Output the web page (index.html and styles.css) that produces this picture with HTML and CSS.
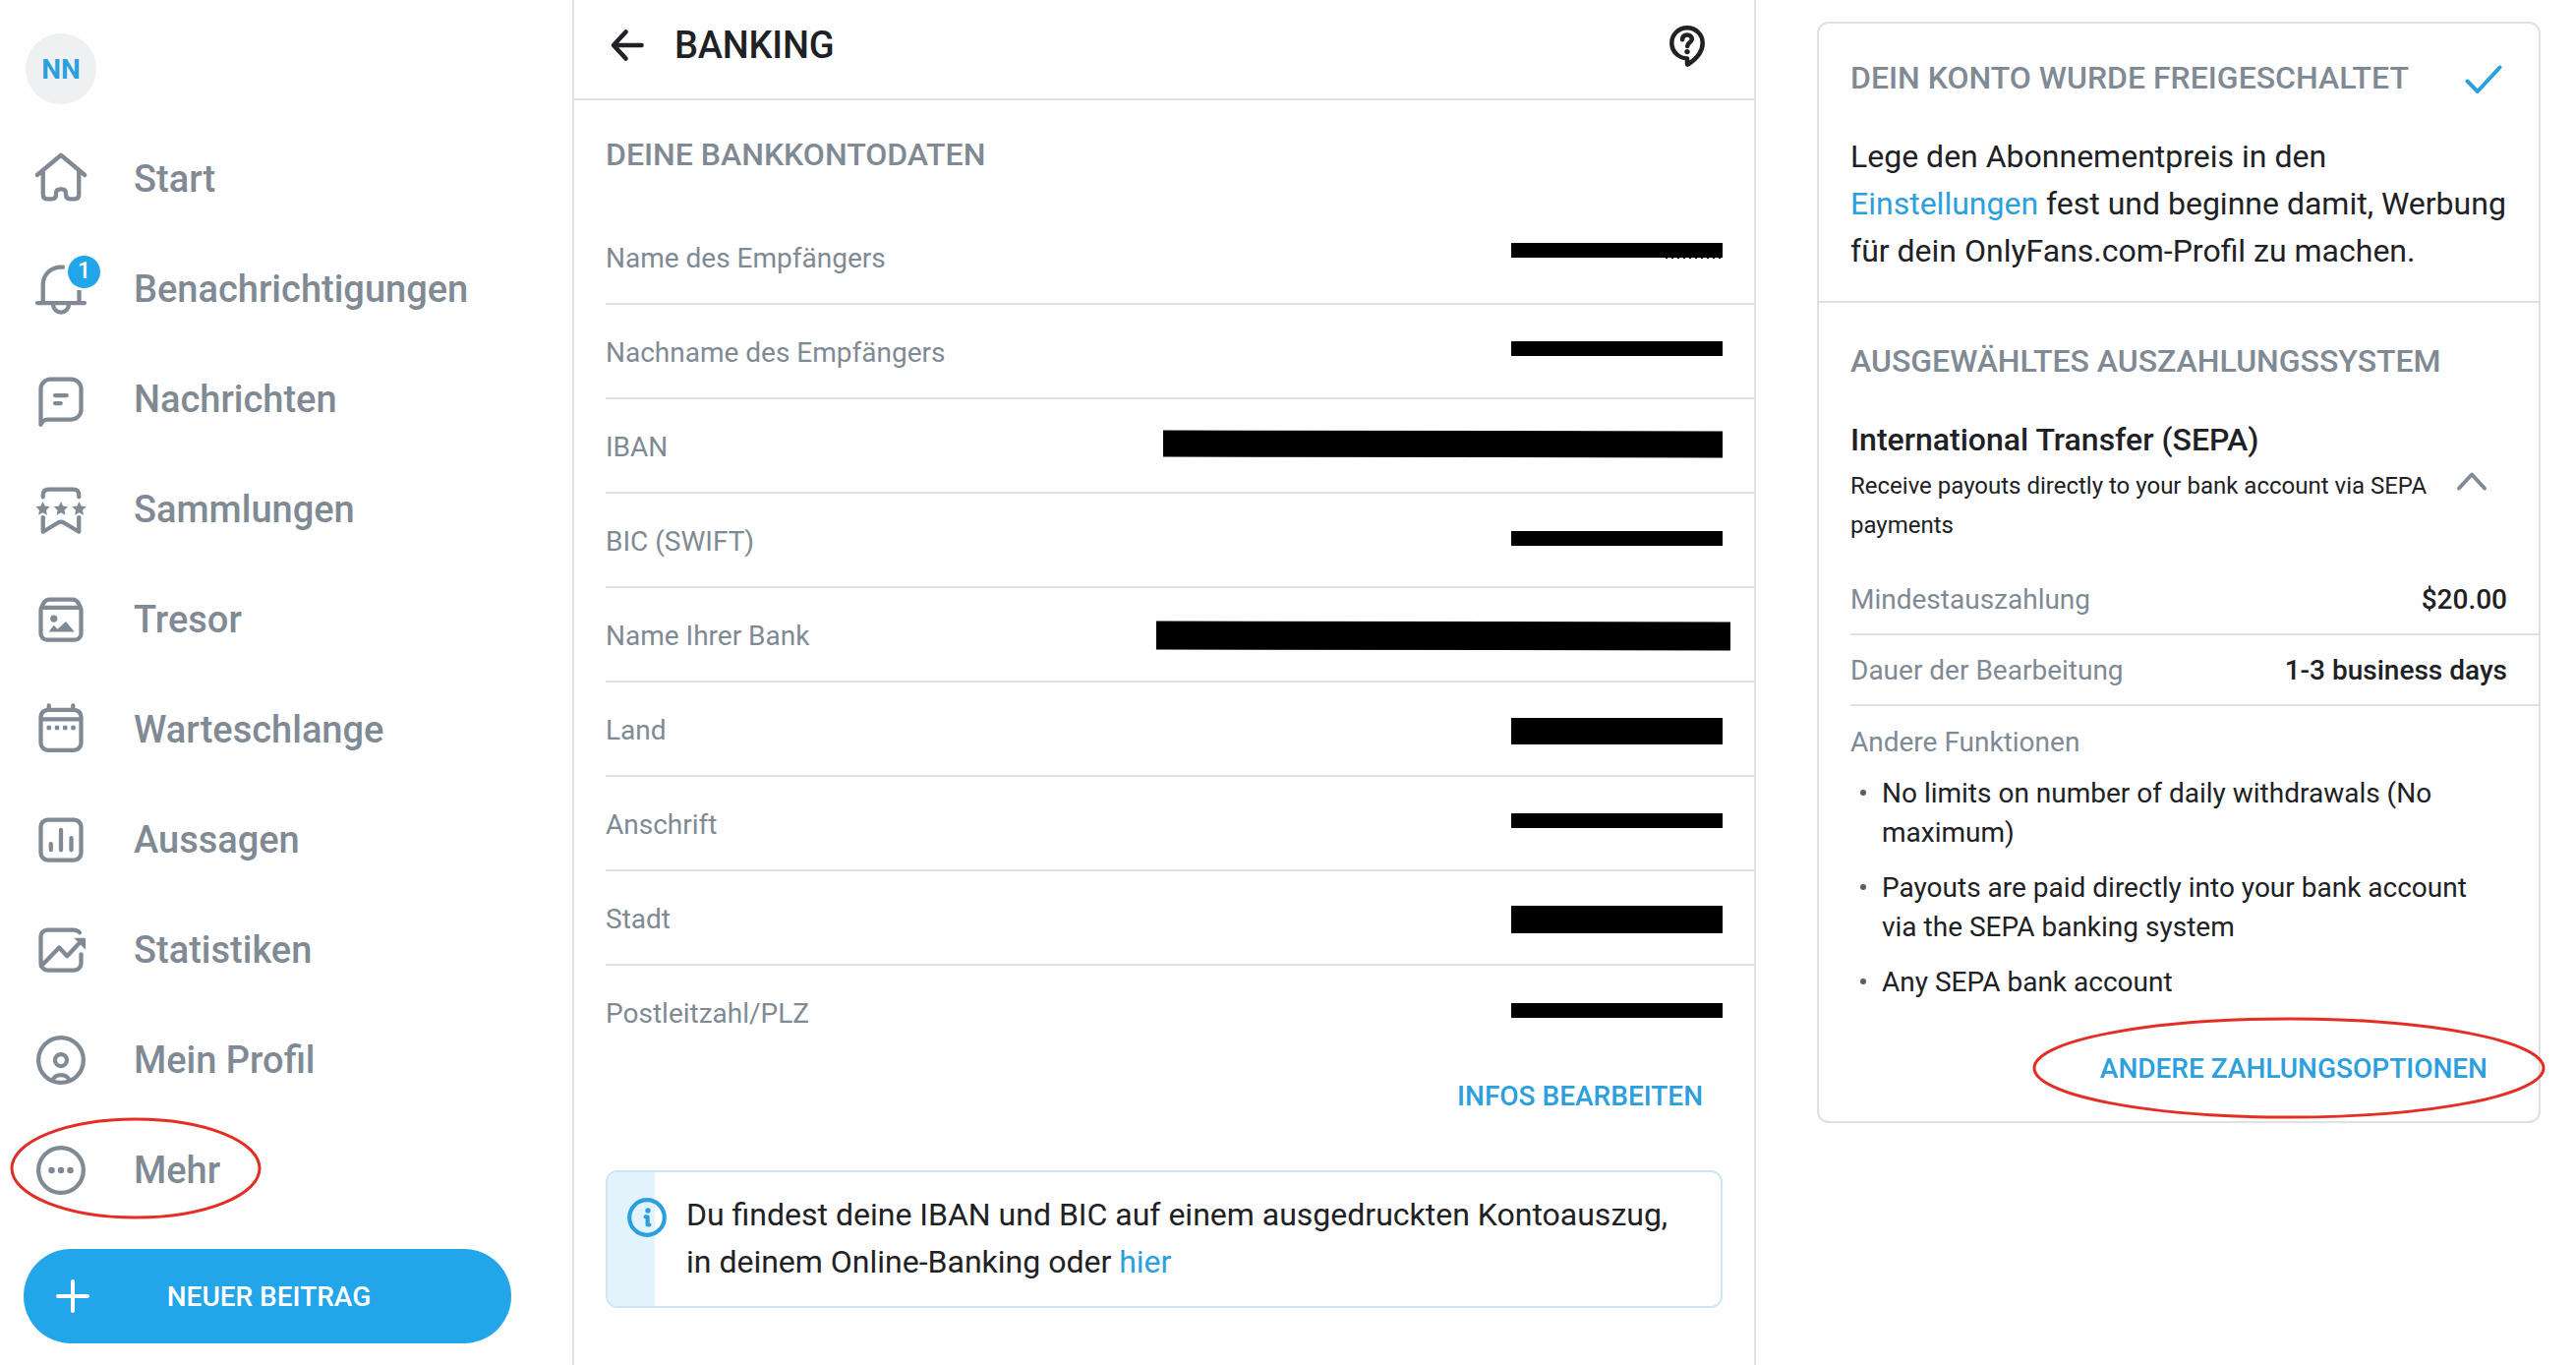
FILE: index.html
```html
<!DOCTYPE html>
<html lang="de">
<head>
<meta charset="utf-8">
<title>Banking</title>
<link rel="stylesheet" href="styles.css">
</head>
<body>
<div class="app">
  <aside class="sidebar">
    <div class="avatar"><span>NN</span></div>
    <nav class="nav">
      <a class="nav-item"><svg class="icon" viewBox="0 0 24 24"><path d="M2.3 10.4 12 2.3l9.7 8.1M4.7 9v9.4q0 1.7 1.7 1.7h1.9q1.7 0 1.7-1.7v-.6q0-1.7 1.7-1.7h.6q1.7 0 1.7 1.7v.6q0 1.7 1.7 1.7h1.9q1.7 0 1.7-1.7V9"/></svg><span>Start</span></a>
      <a class="nav-item"><svg class="icon" viewBox="0 0 24 24"><path class="butt" d="M13.5 3.1q-.7-.1-1.5-.1c-4.2 0-7.3 3.1-7.3 7.2v7.3M19.4 12.4v5.1"/><path d="M2.4 17.6h19.2M8.8 18.2a3.2 3.2 0 0 0 6.4 0"/></svg><span>Benachrichtigungen</span><b class="badge">1</b></a>
      <a class="nav-item"><svg class="icon" viewBox="0 0 24 24"><path d="M3.8 22.3V7.8a4 4 0 0 1 4-4h8.4a4 4 0 0 1 4 4v8.4a4 4 0 0 1-4 4H6.4q-1.7 0-2.6 2.1M9.6 10.4h4.7M9.6 13.6h2.3"/></svg><span>Nachrichten</span></a>
      <a class="nav-item"><svg class="icon" viewBox="0 0 24 24"><path d="M4.7 6.9v-.8q0-2.3 2.3-2.3h10q2.3 0 2.3 2.3v.8M4.7 15.2v5.9l6.3-3.8q1-.5 2 0l6.3 3.8v-5.9"/><g class="solid"><path id="star" d="m4.6 8.8 .85 1.8 2 .25-1.45 1.4.35 2-1.75-.95-1.75.95.35-2-1.45-1.4 2-.25z"/><use href="#star" x="7.4"/><use href="#star" x="14.8"/></g></svg><span>Sammlungen</span></a>
      <a class="nav-item"><svg class="icon" viewBox="0 0 24 24"><path d="M3.8 8.3V17.7a2.5 2.5 0 0 0 2.5 2.5h11.4a2.5 2.5 0 0 0 2.5-2.5V8.3q0-1-.6-2l-.6-1.1q-.8-1.4-2.3-1.4H7.3Q5.8 3.8 5 5.2l-.6 1.1q-.6 1-.6 2M4.2 7.1h15.6"/><g class="solid"><circle cx="9.1" cy="11.6" r="1.45"/><path d="m7 17 2.1-2.7 1.5 1.6 3.4-3.1 3.5 4.2z"/></g></svg><span>Tresor</span></a>
      <a class="nav-item"><svg class="icon" viewBox="0 0 24 24"><rect x="3.8" y="3.9" width="16.4" height="16.4" rx="2.9"/><path d="M4 7.7h16M7.1 2.1v1.5M16.9 2.1v1.5"/><g class="solid"><rect x="6.2" y="10.3" width="1.8" height="1.8" rx=".5"/><rect x="9.5" y="10.3" width="1.8" height="1.8" rx=".5"/><rect x="12.8" y="10.3" width="1.8" height="1.8" rx=".5"/><rect x="16.1" y="10.3" width="1.8" height="1.8" rx=".5"/></g></svg><span>Warteschlange</span></a>
      <a class="nav-item"><svg class="icon" viewBox="0 0 24 24"><rect x="3.8" y="3.8" width="16.4" height="16.4" rx="2.9"/><path d="M7.9 13.6v2.5M12 7.9v8.2M16.2 11.2v4.9"/></svg><span>Aussagen</span></a>
      <a class="nav-item"><svg class="icon" viewBox="0 0 24 24"><path d="M19.6 4.9q-.9-1.1-2.6-1.1H6.6a2.8 2.8 0 0 0-2.8 2.8v10.8a2.8 2.8 0 0 0 2.8 2.8h10.8a2.8 2.8 0 0 0 2.8-2.8v-3.7M3.9 18.6l7.4-7.6 3.2 3.5 5.3-5.7"/><path class="solid" d="M17.3 7.1h4.2q.5 0 .5.5v4.3z"/></svg><span>Statistiken</span></a>
      <a class="nav-item"><svg class="icon" viewBox="0 0 24 24"><circle cx="12" cy="12" r="9.15"/><circle cx="12" cy="12" r="2.4"/><path d="M8.6 20.3c1-3 5.8-3 6.800 0"/></svg><span>Mein Profil</span></a>
      <a class="nav-item"><svg class="icon" viewBox="0 0 24 24"><circle cx="12" cy="12" r="9.15"/><g class="solid"><circle cx="8.2" cy="12" r="1.3"/><circle cx="12" cy="12" r="1.3"/><circle cx="15.8" cy="12" r="1.3"/></g></svg><span>Mehr</span>
        <svg class="marker marker-more" viewBox="0 0 256 104"><ellipse cx="128" cy="52" rx="126" ry="50"/></svg></a>
    </nav>
    <button class="new-post"><svg class="plus" viewBox="0 0 36 36"><path d="M18 3v30M3 18h30"/></svg><span>NEUER BEITRAG</span></button>
  </aside>

  <main class="main">
    <header class="topbar">
      <svg class="back" viewBox="0 0 36 36"><path d="M16.5 4.5 4 18l12.5 13.5M5 18h27.500"/></svg>
      <h1>BANKING</h1>
      <svg class="help" viewBox="0 0 40 46"><path d="M20 4.300c8.800 0 15.700 6.700 15.700 15.500 0 9.200-5.900 16-14.900 21.700q-.8.400-.8-.5v-5.600C11.200 35 4.300 28.600 4.300 19.800 4.300 11 11.200 4.300 20 4.300z"/><path class="mark" d="M15 16.200c.3-3.100 2.300-4.700 5-4.700s4.900 1.700 4.900 4.300c0 3.400-4.700 3.700-4.700 7.200"/><circle class="dot" cx="20" cy="28.600" r="2.700"/></svg>
    </header>
    <section class="account">
      <h2>DEINE BANKKONTODATEN</h2>
      <dl class="fields">
        <div class="field"><dt>Name des Empfängers</dt><dd class="mask remnants"></dd></div>
        <div class="field"><dt>Nachname des Empfängers</dt><dd class="mask lift-3"></dd></div>
        <div class="field"><dt>IBAN</dt><dd class="mask mask-iban"></dd></div>
        <div class="field"><dt>BIC (SWIFT)</dt><dd class="mask lift-2"></dd></div>
        <div class="field"><dt>Name Ihrer Bank</dt><dd class="mask mask-bank"></dd></div>
        <div class="field"><dt>Land</dt><dd class="mask mask-tall"></dd></div>
        <div class="field"><dt>Anschrift</dt><dd class="mask lift-3"></dd></div>
        <div class="field"><dt>Stadt</dt><dd class="mask mask-city"></dd></div>
        <div class="field"><dt>Postleitzahl/PLZ</dt><dd class="mask lift-2"></dd></div>
      </dl>
      <a class="action edit">INFOS BEARBEITEN</a>
      <div class="notice">
        <div class="notice-band"><svg class="info" viewBox="0 0 40 40"><circle cx="20" cy="20" r="17.8"/><circle class="dot" cx="21" cy="13" r="2.7"/><path d="M18.6 19.3h2v8.200h1.700"/></svg></div>
        <p>Du findest deine IBAN und BIC auf einem ausgedruckten Kontoauszug,<br>in deinem Online-Banking oder <a>hier</a></p>
      </div>
    </section>
  </main>

  <aside class="panel">
    <section class="card">
      <div class="approved">
        <h2>DEIN KONTO WURDE FREIGESCHALTET<svg class="check" viewBox="0 0 40 32"><path d="M3.5 17.500 13.800 28 36.500 3.500"/></svg></h2>
        <p>Lege den Abonnementpreis in den<br><a>Einstellungen</a> fest und beginne damit, Werbung<br>für dein OnlyFans.com-Profil zu machen.</p>
      </div>
      <div class="payout">
        <h2>AUSGEWÄHLTES AUSZAHLUNGSSYSTEM</h2>
        <div class="method">
          <div>
            <h3>International Transfer (SEPA)</h3>
            <p>Receive payouts directly to your bank account via SEPA<br>payments</p>
          </div>
          <svg class="chevron" viewBox="0 0 34 22"><path d="M4 18.500 17 4.500l13 14"/></svg>
        </div>
        <dl>
          <div class="fact"><dt>Mindestauszahlung</dt><dd>$20.00</dd></div>
          <div class="fact"><dt>Dauer der Bearbeitung</dt><dd>1-3 business days</dd></div>
        </dl>
        <h4>Andere Funktionen</h4>
        <ul>
          <li>No limits on number of daily withdrawals (No<br>maximum)</li>
          <li>Payouts are paid directly into your bank account<br>via the SEPA banking system</li>
          <li>Any SEPA bank account</li>
        </ul>
        <a class="action options">ANDERE ZAHLUNGSOPTIONEN<svg class="marker marker-options" viewBox="0 0 522 104"><ellipse cx="261" cy="52" rx="259" ry="50"/></svg></a>
      </div>
    </section>
  </aside>
</div>
</body>
</html>
```
FILE: styles.css
```css
* { box-sizing: border-box; margin: 0; padding: 0; }

body {
  background: #fefefe;
  color: #202124;
  font-family: Roboto, "Liberation Sans", sans-serif;
  font-size: 28px;
}

h1, h2, h3, h4 { font-weight: 500; }
svg { display: block; flex: none; fill: none; stroke: currentColor; stroke-linecap: round; stroke-linejoin: round; overflow: visible; }
a { color: #2ba0dc; text-decoration: none; }
ul { list-style: none; }

.app { display: grid; grid-template-columns: 582px 1204px minmax(0, 1fr); height: 1388px; overflow: hidden; }

/* Sidebar */
.sidebar { padding: 34px 24px 0; }
.avatar {
  display: flex; align-items: center; justify-content: center;
  width: 72px; height: 72px; margin-left: 2px;
  border-radius: 50%; background: #eef0f2;
  color: #2ba0dc; font-weight: 700; font-size: 28px;
}
.nav { padding-top: 20px; }
.nav-item {
  position: relative; display: flex; align-items: center; gap: 44px;
  height: 112px; padding-left: 8px;
  color: #808a94; font-size: 38px; font-weight: 500;
}
.icon { width: 60px; height: 60px; stroke-width: 1.7; }
.icon .solid { fill: currentColor; stroke: none; }
.icon .butt { stroke-linecap: butt; }
.badge {
  position: absolute; left: 45px; top: 22px;
  width: 33px; height: 33px; border-radius: 50%;
  background: #23a5ea; color: #fff;
  font-size: 23px; font-weight: 500; line-height: 32px; text-align: center;
}
.new-post {
  display: flex; align-items: center; justify-content: center;
  position: relative; width: 496px; height: 96px; margin-top: 24px; padding-left: 3px;
  border: 0; border-radius: 48px; background: #23a5ea; color: #fff;
  font: 500 28px Roboto, "Liberation Sans", sans-serif;
}
.plus { position: absolute; left: 32px; width: 36px; height: 36px; stroke-width: 4; }

/* Hand-drawn highlight rings */
.marker { position: absolute; color: #e32d25; stroke-width: 3; }
.marker-more { left: -14px; top: 2px; width: 256px; height: 104px; }

/* Main column */
.main { border: solid #dfe1e2; border-width: 0 2px; }
.topbar { display: flex; align-items: center; height: 102px; padding: 0 48px 8px 36px; border-bottom: 2px solid #dfe1e2; }
.back { width: 36px; height: 36px; stroke-width: 4.6; }
.topbar h1 { flex: 1; padding-left: 30px; font-size: 38px; line-height: 44px; letter-spacing: -.2px; }
.help { width: 40px; height: 46px; margin-top: 2px; stroke-width: 4.5; }
.dot { fill: currentColor; stroke: none; }

.account { padding-left: 32px; }
.account h2 { padding: 31px 0 33px; }
h2 { color: #808a94; font-size: 32px; line-height: 48px; }
.field { display: flex; align-items: center; justify-content: space-between; height: 96px; padding-right: 32px; border-bottom: 2px solid #dfe1e2; }
.field:last-child { border-bottom: 0; height: 94px; }
.field dt, .fact dt { color: #808a94; }
.field dt { padding-top: 2px; }
.mask { width: 215px; height: 15px; background: #000; }
.lift-3 { margin-bottom: 5px; }
.lift-2 { margin-bottom: 3px; }
.remnants {
  height: 16px; margin-bottom: 12px;
  background:
    linear-gradient(#000, #000) 0 0 / 100% 15px no-repeat,
    repeating-linear-gradient(90deg, #000 0 2px, transparent 2px 6px) 157px 15px / 58px 1px no-repeat;
}
.mask-iban { width: 569px; height: 27px; margin-bottom: 3px; transform: rotate(.1deg); }
.mask-bank { width: 584px; height: 29px; margin: 2px -8px 0 0; transform: rotate(.1deg); }
.mask-tall { height: 27px; margin-top: 5px; }
.mask-city { height: 28px; margin-top: 4px; }

.action { display: flex; align-items: center; font-weight: 500; }
.edit { justify-content: flex-end; height: 76px; padding-right: 52px; }
.notice { display: flex; width: 1136px; height: 140px; margin-top: 38px; border: 2px solid #cde6f4; border-radius: 12px; overflow: hidden; font-size: 32px; line-height: 48px; }
.notice-band { width: 48px; padding: 26px 0 0 20px; background: #e3f3fc; }
.info { width: 40px; height: 40px; stroke-width: 4.2; color: #2ba0dc; }
.notice p { padding: 19px 0 0 32px; }

/* Right column */
.panel { padding: 22px 36px 0 62px; }
.card { height: 1120px; border: 2px solid #dfe1e2; border-radius: 12px; }
.approved { height: 284px; padding: 31px 32px 0; border-bottom: 2px solid #dfe1e2; }
.approved h2 { display: flex; justify-content: space-between; align-items: center; padding-right: 4px; }
.check { width: 40px; height: 32px; margin-top: 4px; stroke-width: 4; color: #2ba0dc; }
.approved p { padding-top: 32px; font-size: 32px; line-height: 48px; white-space: nowrap; }
.payout { padding: 35px 0 0 32px; }
.method { display: flex; justify-content: space-between; align-items: center; padding: 32px 51px 0 0; }
.method h3 { font-size: 32px; line-height: 48px; }
.method p { padding-top: 3px; font-size: 24px; line-height: 40px; white-space: nowrap; }
.chevron { width: 34px; height: 22px; stroke-width: 4; color: #808a94; }
.payout dl { padding-top: 20px; }
.fact { display: flex; justify-content: space-between; align-items: center; height: 72px; padding-right: 32px; border-bottom: 2px solid #dfe1e2; }
.fact dd { font-weight: 500; }
.payout h4 { padding-top: 17px; color: #808a94; font-weight: 400; font-size: 28px; line-height: 40px; }
li { position: relative; margin: 12px 0 16px; padding-left: 32px; line-height: 40px; }
li + li { margin-top: 0; }
li::before { content: ""; position: absolute; left: 10px; top: 16px; width: 6px; height: 6px; border-radius: 50%; background: #5b5d60; }
.options { position: relative; justify-content: flex-end; height: 80px; padding-right: 52px; margin-top: 27px; }
.marker-options { right: -7px; top: -12px; width: 522px; height: 104px; }
```
